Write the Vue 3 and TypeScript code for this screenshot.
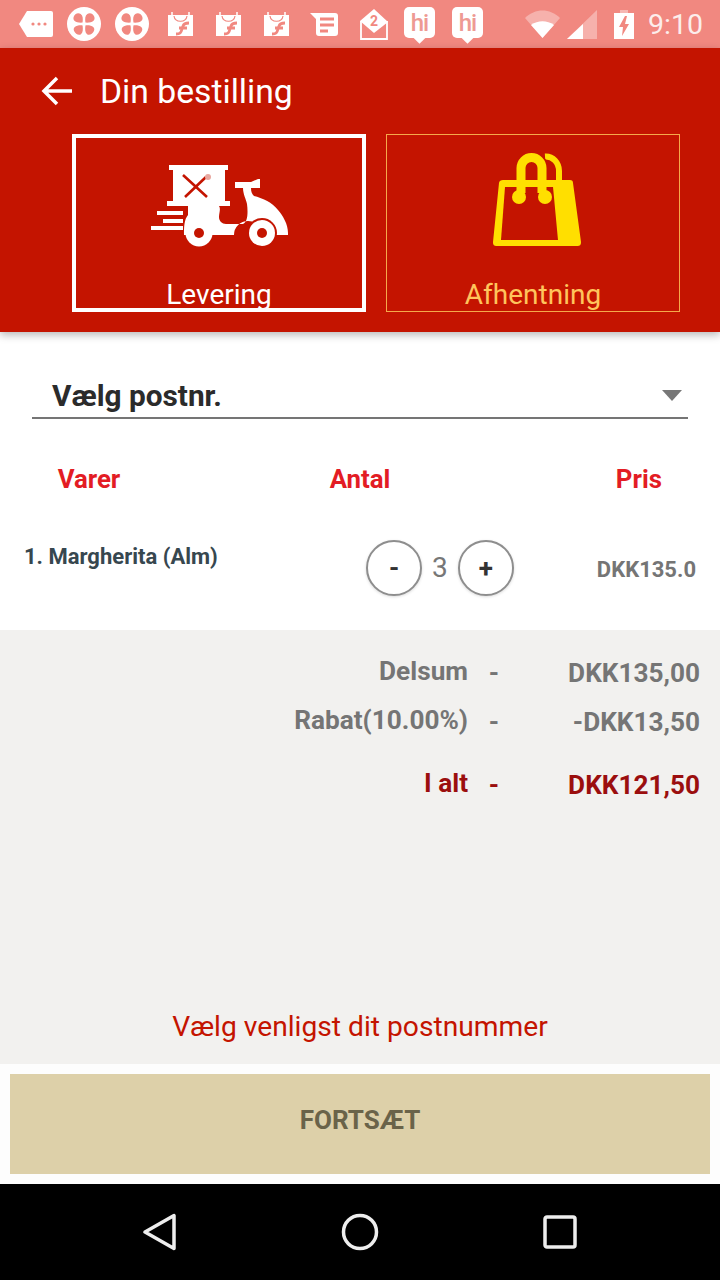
<template>
  <div class="screen">
    <div class="status-bar">
      <div class="notif-icons">
        <svg width="34" height="26" viewBox="0 0 34 26"><path d="M8 0h24a2 2 0 0 1 2 2v22a2 2 0 0 1-2 2H8L0 13z" fill="#fff" /><circle cx="14" cy="13" r="1.6" fill="#f18880" /><circle cx="20" cy="13" r="1.6" fill="#f18880" /><circle cx="26" cy="13" r="1.6" fill="#f18880" /></svg>
        <svg v-for="n in 2" :key="'c' + n" width="34" height="34" viewBox="0 0 36 36"><circle cx="18" cy="18" r="18" fill="#fff" /><g fill="#f18880"><path d="M16.500 16.500C9 17 6 14 7 10.500s5-5 7.500-3 2.500 5 2 9z" /><path d="M19.500 16.500C27 17 30 14 29 10.500s-5-5-7.500-3-2.500 5-2 9z" /><path d="M16.500 19.500C9 19 6 22 7.500 25.500s5.500 5 7.500 3 2-5 1.500-9z" /><path d="M19.500 19.500C27 19 30 22 28.500 25.500s-5.500 5-7.500 3-2-5-1.500-9z" /></g></svg>
        <div class="shop-group">
          <svg v-for="n in 3" :key="'s' + n" width="25" height="24" viewBox="0 0 25 24"><path d="M0 3h25v21H0z" fill="#fff" /><path d="M4 0v5M21 0v5" stroke="#fff" stroke-width="1.500" /><path d="M6 4c1 7 12 7 13 0" fill="none" stroke="#f18880" stroke-width="1.200" /><path d="M8 22c4 0 5-1 6-5l1-3c.6-2 2.500-3 6-3M11 16h8" fill="none" stroke="#f18880" stroke-width="2.800" /></svg>
        </div>
        <svg class="chat" width="28" height="23" viewBox="0 0 28 23"><path d="M0 0h25a3 3 0 0 1 3 3v17a3 3 0 0 1-3 3H9a3 3 0 0 1-3-3V6z" fill="#fff" /><path d="M10 6h14M10 12h14M10 18h8" stroke="#f18880" stroke-width="2.800" /></svg>
        <svg class="mail" width="28" height="32" viewBox="0 0 28 32"><path d="M1 13v18h26V13" fill="none" stroke="#fff" stroke-width="1.800" /><path d="M0 13L14 1l14 13-14 11z" fill="#fff" /><text x="14" y="18" text-anchor="middle" class="mail-num">2</text></svg>
        <div class="hi-group">
          <div v-for="n in 2" :key="'h' + n" class="hi-bubble"><span>hi</span></div>
        </div>
      </div>
      <div class="sys-icons">
        <svg width="35" height="28" viewBox="0 0 35 28"><path d="M0 8C10-2 25-2 35 8L17.500 28z" fill="#fff" opacity=".35" /><path d="M6 15c7-5 16-5 23 0L17.500 28z" fill="#fff" /></svg>
        <svg class="signal" width="30" height="29" viewBox="0 0 30 29"><path d="M30 0v29H0z" fill="#fff" opacity=".35" /><path d="M16 14v15H0z" fill="#fff" /></svg>
        <svg class="batt" width="20" height="29" viewBox="0 0 20 29"><path d="M6 0h8v3H6z" fill="#fff" opacity=".4" /><path d="M0 3h20v26H0z" fill="#fff" /><path d="M11 6l-6 11h4l-1 9 7-12h-4l2-8z" fill="#f18880" /></svg>
        <span class="clock">9:10</span>
      </div>
    </div>

    <header class="app-header">
      <div class="title-row">
        <svg class="back" width="32" height="30" viewBox="0 0 32 30"><path d="M31 15H3M16 2L3 15l13 13" fill="none" stroke="#fff" stroke-width="3.500" /></svg>
        <span class="title">Din bestilling</span>
      </div>
      <div class="mode-row">
        <div class="mode active">
          <svg class="mode-icon" width="138" height="84" viewBox="0 0 138 84">
            <!-- food box on the scooter -->
            <path d="M19 1h59v5h-3v31h5v5H17v-5h6V6h-4z" fill="#fff" />
            <path d="M33 11l24 22M56 13L35 33" stroke="#c41400" stroke-width="2.600" fill="none" />
            <circle cx="58" cy="13" r="3" fill="#e8a79f" />
            <path d="M7 49h26M13 57h20M1 64h32" stroke="#fff" stroke-width="4" fill="none" />
            <path d="M38 42H69c2 3 0 7 0 11 0 4 3 7 7 7h17c5-2 5-12 4-20-1-5-4-10-4-16h-8v-6h16l7-3h2v9h-9c0 4 1 6 3 8 8 2 18 6 24 14 5 6 10 14 10 23v2h-26a14 14 0 0 0-28 0H62a14 14 0 0 0-26 0h-2c0-8 0-15 4-20z" fill="#fff" />
            <circle cx="49" cy="69" r="13.500" fill="#fff" /><circle cx="49" cy="69" r="5" fill="#c41400" />
            <circle cx="112" cy="69" r="15" fill="#c41400" />
            <circle cx="112" cy="69" r="13" fill="#fff" /><circle cx="112" cy="69" r="5" fill="#c41400" />
          </svg>
          <span class="mode-label">Levering</span>
        </div>
        <div class="mode pickup">
          <svg class="mode-icon bag" width="88" height="94" viewBox="0 0 88 94">
            <path d="M52 3.500C60 3 66 10 66 18V30" fill="none" stroke="#ffdf00" stroke-width="6" />
            <path d="M28 30V15a10.500 10.500 0 0 1 21 0V30" fill="none" stroke="#c41400" stroke-width="12" />
            <path d="M10 27h67c2 0 3 1 3 3l8 59c0 3-1 4-4 4H4c-3 0-4-1-4-4l6-59c0-2 2-3 4-3z" fill="#ffdf00" />
            <path d="M12 34h48l5 53H8z" fill="#c41400" />
            <path d="M28 40V15a10.500 10.500 0 0 1 21 0V40" fill="none" stroke="#ffdf00" stroke-width="9" />
            <circle cx="26" cy="44" r="7" fill="#ffdf00" /><circle cx="52" cy="44" r="7" fill="#ffdf00" />
          </svg>
          <span class="mode-label">Afhentning</span>
        </div>
      </div>
    </header>

    <main class="content">
      <div class="order-part">
        <div class="select-row">
          <span>Vælg postnr.</span>
          <i class="caret"></i>
        </div>
        <div class="col-heads">
          <span>Varer</span>
          <span>Antal</span>
          <span class="pris">Pris</span>
        </div>
        <div class="line-item">
          <span class="item-name">{{ item.name }}</span>
          <div class="stepper">
            <button class="step-btn">-</button>
            <span class="qty">{{ item.qty }}</span>
            <button class="step-btn">+</button>
          </div>
          <span class="item-price">{{ item.price }}</span>
        </div>
      </div>

      <section class="totals">
        <div v-for="row in totals" :key="row.label" class="total-row" :class="{ grand: row.grand }">
          <span class="t-label">{{ row.label }}</span>
          <span class="t-dash">-</span>
          <span class="t-value">{{ row.value }}</span>
        </div>
        <p class="notice">Vælg venligst dit postnummer</p>
      </section>

      <div class="cta-wrap">
        <button class="cta">FORTSÆT</button>
      </div>
    </main>

    <nav class="nav-bar">
      <svg width="34" height="38" viewBox="0 0 34 38"><path d="M31 2.500v33L2 19z" fill="none" stroke="#eee" stroke-width="3.500" stroke-linejoin="round" /></svg>
      <svg width="38" height="38" viewBox="0 0 38 38"><circle cx="19" cy="19" r="16.500" fill="none" stroke="#eee" stroke-width="3.500" /></svg>
      <svg width="34" height="34" viewBox="0 0 34 34"><rect x="2" y="2" width="30" height="30" rx="2" fill="none" stroke="#eee" stroke-width="3.500" /></svg>
    </nav>
  </div>
</template>

<script setup lang="ts">
const item = { name: '1. Margherita (Alm)', qty: 3, price: 'DKK135.0' }

const totals = [
  { label: 'Delsum', value: 'DKK135,00', grand: false },
  { label: 'Rabat(10.00%)', value: '-DKK13,50', grand: false },
  { label: 'I alt', value: 'DKK121,50', grand: true }
]
</script>

<style>
html,
body {
  margin: 0;
  background: #fff;
}
</style>

<style scoped>
.screen {
  width: 720px;
  height: 1280px;
  display: flex;
  flex-direction: column;
  overflow: hidden;
  font-family: Roboto, 'Liberation Sans', sans-serif;
}

.status-bar {
  height: 48px;
  flex: none;
  background: #f18880;
  display: flex;
  align-items: center;
  justify-content: space-between;
  padding: 0 17px 0 19px;
  box-sizing: border-box;
}

.notif-icons {
  display: flex;
  align-items: center;
  gap: 14px;
}

.notif-icons svg {
  display: block;
}

.shop-group {
  display: flex;
  gap: 23px;
  margin-left: 5px;
}

.chat {
  margin-left: 7px;
}

.mail {
  margin-left: 8px;
}

.mail-num {
  font: 700 14px Roboto, sans-serif;
  fill: #f18880;
}

.hi-group {
  display: flex;
  gap: 17px;
  margin-left: 2px;
}

.hi-bubble {
  position: relative;
  width: 31px;
  height: 31px;
  margin-top: -3px;
  background: #fff;
  border-radius: 5px;
  display: flex;
  align-items: center;
  justify-content: center;
  font-size: 24px;
  font-weight: 500;
  line-height: 1;
  letter-spacing: -1px;
  color: #ee9a93;
}

.hi-bubble::after {
  content: '';
  position: absolute;
  left: 11px;
  bottom: -4px;
  width: 9px;
  height: 9px;
  background: #fff;
  transform: rotate(45deg);
}

.sys-icons {
  display: flex;
  align-items: center;
}

.signal {
  margin-left: 7px;
}

.batt {
  margin-left: 17px;
}

.clock {
  margin-left: 14px;
  margin-top: 2px;
  font-size: 28.500px;
  color: #fff;
  opacity: 0.85;
  line-height: 1;
}

.app-header {
  flex: none;
  height: 284px;
  box-sizing: border-box;
  background: #c41400;
  padding: 0 40px 20px;
  box-shadow: 0 3px 8px rgba(0, 0, 0, 0.28);
  position: relative;
  z-index: 1;
}

.title-row {
  height: 86px;
  display: flex;
  align-items: center;
  gap: 27px;
}

.back {
  margin-left: 1px;
}

.title {
  font-size: 33.700px;
  color: #fff;
  line-height: 1;
  margin-top: 1px;
}

.mode-row {
  display: flex;
  gap: 20px;
  margin-left: 32px;
  width: 608px;
}

.mode {
  width: 294px;
  height: 178px;
  box-sizing: border-box;
  display: flex;
  flex-direction: column;
  align-items: center;
  justify-content: space-between;
  overflow: hidden;
}

.mode.active {
  border: 4px solid #fff;
  color: #fff;
  padding-top: 26px;
}

.mode.pickup {
  border: 1px solid #f5a94a;
  color: #ffc45c;
  padding-top: 18px;
}

.bag {
  margin-left: 8px;
}

.mode-label {
  font-size: 28px;
  line-height: 30px;
}

.active .mode-label {
  margin-bottom: -2px;
}

.pickup .mode-label {
  margin-bottom: 1px;
}

.content {
  flex: 1;
  display: flex;
  flex-direction: column;
  min-height: 0;
}

.order-part {
  height: 298px;
  flex: none;
  box-sizing: border-box;
  background: #fff;
  padding-top: 42px;
}

.select-row {
  margin: 0 32px;
  height: 45px;
  box-sizing: border-box;
  padding: 0 20px;
  border-bottom: 2px solid #757575;
  display: flex;
  align-items: center;
  justify-content: space-between;
  font-size: 29.800px;
  font-weight: 700;
  color: #2b2b2b;
}

.caret {
  width: 0;
  height: 0;
  border-left: 10px solid transparent;
  border-right: 10px solid transparent;
  border-top: 11px solid #777;
  margin-right: -14px;
}

.col-heads {
  display: grid;
  grid-template-columns: 178px 364px 1fr;
  text-align: center;
  margin-top: 45px;
  font-size: 25.800px;
  font-weight: 700;
  color: #e31c24;
  line-height: 30px;
}

.pris {
  text-align: right;
  padding-right: 58px;
}

.line-item {
  display: flex;
  align-items: flex-start;
  margin-top: 47px;
  padding: 0 24px;
}

.item-name {
  width: 342px;
  flex: none;
  font-size: 22px;
  font-weight: 700;
  color: #37474f;
  line-height: 28px;
  margin-top: 2px;
}

.stepper {
  display: flex;
  align-items: center;
  gap: 10px;
  margin-top: -1px;
}

.step-btn {
  width: 56px;
  height: 56px;
  box-sizing: border-box;
  border-radius: 50%;
  border: 2px solid #8e8e8e;
  background: #fff;
  padding: 0;
  font: 700 26px Roboto, sans-serif;
  color: #333;
  box-shadow: 0 1px 3px rgba(0, 0, 0, 0.15);
}

.qty {
  font-size: 28px;
  color: #777;
  line-height: 1;
}

.item-price {
  flex: 1;
  text-align: right;
  font-size: 22px;
  font-weight: 700;
  color: #757575;
  line-height: 56px;
  margin-top: 1px;
}

.totals {
  flex: 1;
  min-height: 0;
  background: #f2f1ef;
  display: flex;
  flex-direction: column;
  padding-top: 18px;
}

.total-row {
  display: grid;
  grid-template-columns: 468px 52px 1fr;
  align-items: center;
  height: 49px;
  padding-right: 20px;
  font-size: 26.200px;
  font-weight: 700;
  color: #757575;
}

.total-row.grand {
  margin-top: 14px;
  color: #9b0e0e;
}

.t-label {
  text-align: right;
  margin-bottom: 3px;
}

.t-dash {
  text-align: center;
}

.t-value {
  text-align: right;
}

.notice {
  margin: auto 0 21px;
  text-align: center;
  font-size: 28.200px;
  line-height: 32px;
  color: #c41400;
}

.cta-wrap {
  flex: none;
  background: #fdfdfd;
  padding: 10px;
}

.cta {
  display: block;
  width: 100%;
  height: 100px;
  border: 0;
  padding: 0 0 8px;
  background: #ddd0a9;
  font: 700 26px Roboto, sans-serif;
  color: #6a6349;
}

.nav-bar {
  height: 96px;
  flex: none;
  background: #000;
  display: flex;
  align-items: center;
  justify-content: space-between;
  padding: 0 143px;
  box-sizing: border-box;
}
</style>
